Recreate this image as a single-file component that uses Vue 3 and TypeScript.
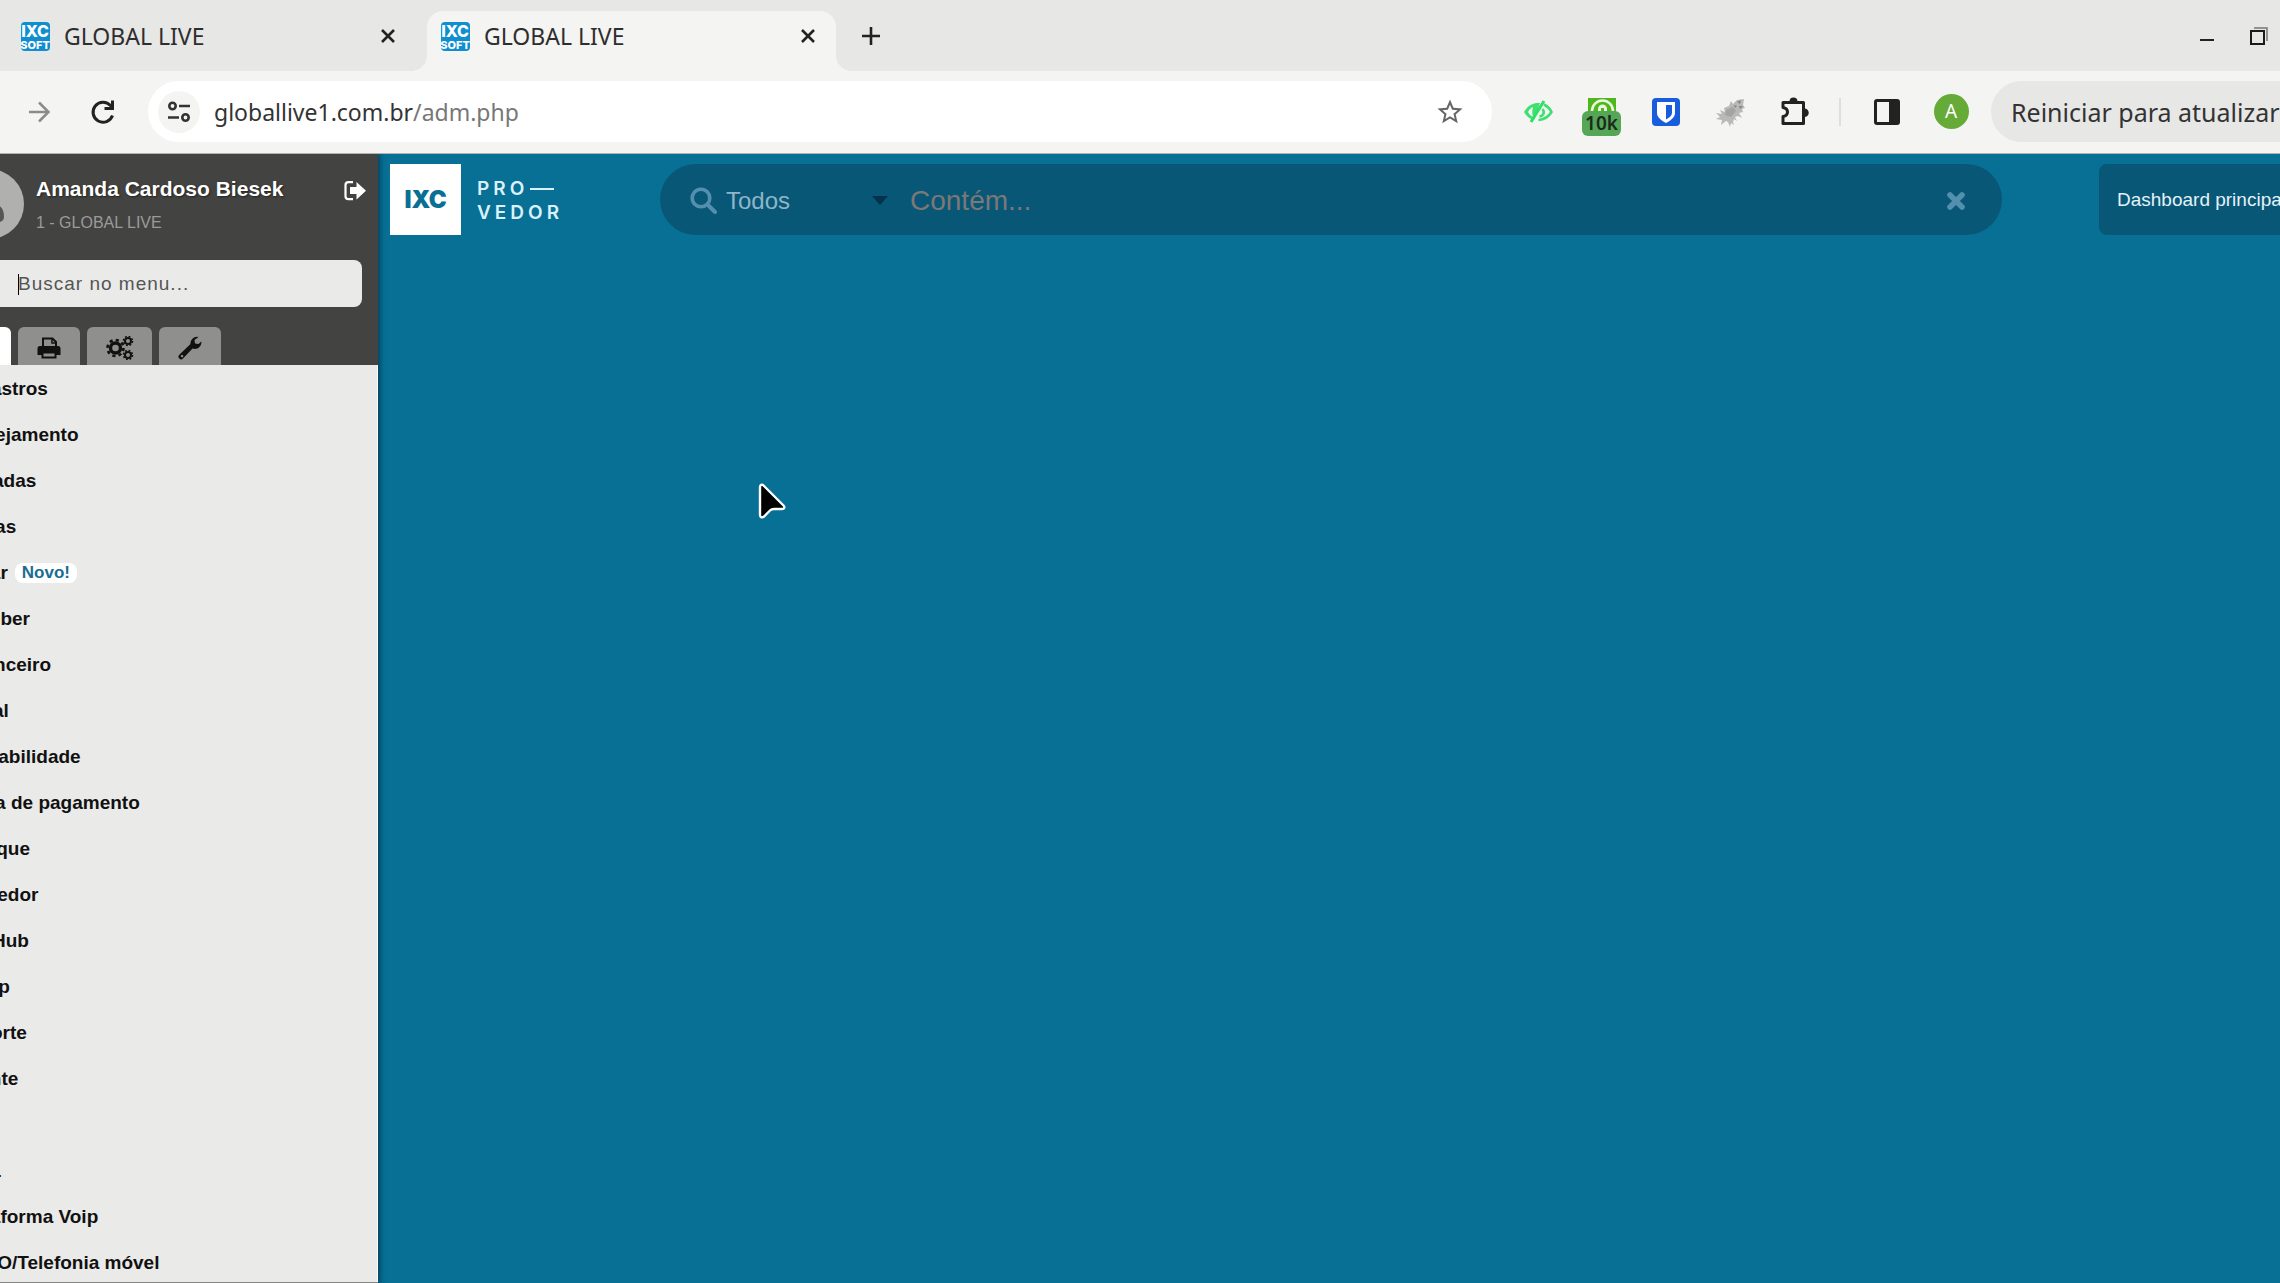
<script setup lang="ts">
import { ref } from 'vue'

interface MenuItem {
  label: string
  badge?: string
}

const tabs = ref([
  { id: 1, title: 'GLOBAL LIVE', active: false },
  { id: 2, title: 'GLOBAL LIVE', active: true },
])

const menu: MenuItem[] = [
  { label: 'Cadastros' },
  { label: 'Planejamento' },
  { label: 'Entradas' },
  { label: 'Saídas' },
  { label: 'Pagar', badge: 'Novo!' },
  { label: 'Receber' },
  { label: 'Financeiro' },
  { label: 'Fiscal' },
  { label: 'Contabilidade' },
  { label: 'Folha de pagamento' },
  { label: 'Estoque' },
  { label: 'Provedor' },
  { label: 'IXC Hub' },
  { label: 'inMap' },
  { label: 'Suporte' },
  { label: 'Cliente' },
  { label: 'Voip' },
  { label: 'MAIL' },
  { label: 'Plataforma Voip' },
  { label: 'MVNO/Telefonia móvel' },
]

const menuQuery = ref('')
const query = ref('')
</script>

<template>
  <div class="window">
    <header class="tabstrip">
      <div v-for="tab in tabs" :key="tab.id" class="tab" :class="{ active: tab.active }">
        <svg class="favicon" viewBox="0 0 29 29" aria-hidden="true">
          <rect width="29" height="29" rx="4" fill="#0f8fd0" />
          <text x="14" y="15" text-anchor="middle" class="fav-big">IXC</text>
          <text x="14" y="27" text-anchor="middle" class="fav-small">SOFT</text>
        </svg>
        <span class="tab-title">{{ tab.title }}</span>
        <button class="tab-close" type="button" aria-label="Fechar aba">
          <svg width="16" height="16" viewBox="0 0 16 16"><path d="M2 2l12 12M14 2L2 14" stroke="#222" stroke-width="2.6" /></svg>
        </button>
      </div>
      <button class="new-tab" type="button" aria-label="Nova aba">
        <svg width="18" height="18" viewBox="0 0 18 18"><path d="M9 0v18M0 9h18" stroke="#222" stroke-width="2.6" /></svg>
      </button>
      <div class="win-controls">
        <button type="button" aria-label="Minimizar">
          <svg width="18" height="20" viewBox="0 0 18 20"><path d="M2 14h14" stroke="#222" stroke-width="2" /></svg>
        </button>
        <button type="button" aria-label="Restaurar">
          <svg width="20" height="20" viewBox="0 0 20 20" fill="none"><path d="M5 2h13v13" stroke="#777" stroke-width="1.5" /><rect x="2" y="5" width="13" height="13" stroke="#1a1a1a" stroke-width="2" /></svg>
        </button>
      </div>
    </header>

    <div class="toolbar">
      <button class="tool" type="button" aria-label="Avançar">
        <svg width="24" height="24" viewBox="0 0 24 24" fill="none"><path d="M2 12h19M12 2.500l9.500 9.500-9.500 9.500" stroke="#8b8b8a" stroke-width="2.500" /></svg>
      </button>
      <button class="tool" type="button" aria-label="Recarregar">
        <svg width="26" height="26" viewBox="0 0 26 26" fill="none"><path d="M22.500 16.500A10 10 0 1 1 20.500 6.500L22 8" stroke="#222" stroke-width="3" /><path d="M24 1.500v9.500h-9.500V8H21V1.500z" fill="#222" /></svg>
      </button>
      <div class="address">
        <button class="site-info" type="button" aria-label="Informações do site">
          <svg width="24" height="22" viewBox="0 0 24 22" fill="none" stroke="#333" stroke-width="2.600"><circle cx="5.500" cy="5" r="3.200" /><path d="M12 5h11M1 16.500h11" /><circle cx="18.500" cy="16.500" r="3.200" /></svg>
        </button>
        <a class="url" href="#">globallive1.com.br<span>/adm.php</span></a>
        <button class="star" type="button" aria-label="Favoritar">
          <svg width="30" height="30" viewBox="0 0 24 24"><path fill="#666" d="M22 9.240l-7.190-.620L12 2 9.190 8.630 2 9.240l5.460 4.730L5.820 21 12 17.270 18.180 21l-1.630-7.030L22 9.240zM12 15.400l-3.760 2.270 1-4.280-3.320-2.880 4.380-.380L12 6.100l1.710 4.040 4.380.380-3.320 2.880 1 4.280L12 15.400z" /></svg>
        </button>
      </div>
      <button class="tool" type="button" aria-label="Privacidade">
        <svg width="30" height="24" viewBox="0 0 30 24" fill="none"><path d="M1 12C7 2 14 3 17 3L11 20C7 19 3 16 1 12z" fill="#3ee06f" /><path d="M5 12c1.500-3 3-4 5-5-1 4-1 6 0 10-2-1-4-3-5-5z" fill="#f4f4f3" /><path d="M8 22L21 1" stroke="#2fe068" stroke-width="3" /><path d="M21 4.500c3 1.500 6 4.500 7.500 7.500-3 5-7 7.500-13 8M19.500 9c3 4 0 7-3 7.500" stroke="#3ee06f" stroke-width="2.600" /></svg>
      </button>
      <button class="tool badge-tool" type="button" aria-label="Extensão, 10k bloqueados">
        <svg width="28" height="28" viewBox="0 0 28 28" fill="none"><rect width="28" height="28" fill="#4fb71d" /><path d="M4 13a10.500 10.500 0 0 1 21 0" stroke="#e6f7dc" stroke-width="2.500" /><path d="M10 14v-3a4.500 4.500 0 0 1 9 0v3" fill="#e6f7dc" /><path d="M13 14v-4h3v4" fill="#4fb71d" /></svg>
        <span class="ext-badge">10k</span>
      </button>
      <button class="tool" type="button" aria-label="Cofre de senhas">
        <svg width="28" height="28" viewBox="0 0 28 28"><rect width="28" height="28" rx="4" fill="#175ddc" /><path d="M5 4h18v11c0 4-4 7.500-9 10-5-2.500-9-6-9-10z" fill="#fff" /><path d="M14 7h6v8c0 2.500-2.500 4.500-6 6.500z" fill="#175ddc" /></svg>
      </button>
      <button class="tool" type="button" aria-label="Extensão">
        <svg width="30" height="30" viewBox="0 0 30 30"><path fill="#b9b9b8" d="M9 11l5-2 2-5 2 3 4-4 7-1-1 6 2 3-3 1 1 3-4 1 3 5-4-2-3 1 2 4-3-2-1 3 1 3-3-2-1 4-2-5-2-1-5 4 1-5-6-1 4-2-4-4 6 1-2-4 5 2z" /><path fill="#8f8f8e" d="M11 13l7-3 3 4-5 6-6-2z" opacity=".5" /><path fill="#858584" d="M22 5l4-2-1 4zM24 9l4 0-3 3zM19 8l3 1-2 2z" /></svg>
      </button>
      <button class="tool" type="button" aria-label="Extensões">
        <svg width="32" height="32" viewBox="0 0 32 32"><path d="M5 6.500h20.500v21H5v-7c6-1 6-8 0-9z" fill="none" stroke="#222" stroke-width="3" stroke-linejoin="round" /><path d="M11.500 5.500a4 4 0 0 1 8 0zM26.500 12.500a4 4 0 0 1 0 8.500z" fill="#222" /></svg>
      </button>
      <span class="divider"></span>
      <button class="tool" type="button" aria-label="Painel lateral">
        <svg width="26" height="26" viewBox="0 0 26 26"><rect x="1.500" y="1.500" width="23" height="23" rx="1.500" fill="none" stroke="#222" stroke-width="3" /><path d="M15 2h9v22h-9z" fill="#222" /></svg>
      </button>
      <button class="tool" type="button" aria-label="Perfil"><span class="profile">A</span></button>
      <button class="restart" type="button">Reiniciar para atualizar</button>
    </div>

    <div class="page">
      <aside class="sidebar">
        <div class="side-head">
          <div class="user">
            <svg class="avatar" viewBox="0 0 70 70" aria-hidden="true"><circle cx="35" cy="35" r="35" fill="#b0b0af" /><circle cx="34" cy="24" r="9" fill="#565655" /><path d="M19 50c0-11 4-16 15-16s16 4 16 14c0 3-2 5-5 5H23c-3 0-4-1-4-3z" fill="#565655" /></svg>
            <div class="who">
              <strong>Amanda Cardoso Biesek</strong>
              <small>1 - GLOBAL LIVE</small>
            </div>
            <button class="logout" type="button" aria-label="Sair">
              <svg width="22" height="20" viewBox="0 0 22 20"><path d="M9 1.200H4.500a3 3 0 0 0-3 3v11a3 3 0 0 0 3 3H9" fill="none" stroke="#fff" stroke-width="2.200" /><path d="M6 6h6.500V1L22 9.700l-9.500 8.800V13H6z" fill="#fff" /></svg>
            </button>
          </div>
          <input v-model="menuQuery" class="menu-search" type="text" placeholder="Buscar no menu..." aria-label="Buscar no menu" />
          <i class="caret"></i>
          <nav class="side-tabs">
            <button class="current" type="button" aria-label="Menu"></button>
            <button class="narrow" type="button" aria-label="Relatórios">
              <svg width="24" height="22" viewBox="0 0 24 22"><path d="M6 10V1.500h9.500L19 5v5" fill="none" stroke="#111" stroke-width="2" /><path d="M15 1v5h4" fill="none" stroke="#111" stroke-width="1.500" /><path d="M3 9h18a2.500 2.500 0 0 1 2.500 2.500V18H19v-3H5v3H.5v-6.500A2.500 2.500 0 0 1 3 9z" fill="#111" /><path d="M5.500 15.500h13v5h-13z" fill="none" stroke="#111" stroke-width="2" /></svg>
            </button>
            <button class="wide" type="button" aria-label="Configurações">
              <svg width="28" height="24" viewBox="0 0 28 24" fill="none" stroke="#111"><circle cx="9.500" cy="12" r="5" stroke-width="3.400" /><circle cx="9.500" cy="12" r="8" stroke-width="2.600" stroke-dasharray="3.140 3.140" /><circle cx="22" cy="5" r="3" stroke-width="2" /><circle cx="22" cy="5" r="4.500" stroke-width="1.600" stroke-dasharray="1.770 1.770" /><circle cx="22" cy="19" r="3" stroke-width="2" /><circle cx="22" cy="19" r="4.500" stroke-width="1.600" stroke-dasharray="1.770 1.770" /></svg>
            </button>
            <button class="narrow" type="button" aria-label="Ferramentas">
              <svg width="24" height="24" viewBox="0 0 24 24"><path fill="#111" fill-rule="evenodd" d="M12.500 8A6.500 6.500 0 0 1 20.500 1l-4 3 .5 3.500 3.500.5 2.800-2.500A6.500 6.500 0 0 1 14.500 12.500L5 22.500a2.500 2.500 0 0 1-3.700-3.700zM3.200 19.200a1.200 1.200 0 1 0 1.700 1.700 1.200 1.200 0 0 0-1.700-1.700z" /></svg>
            </button>
          </nav>
        </div>
        <ul class="menu">
          <li v-for="item in menu" :key="item.label">
            <a href="#">{{ item.label }}</a>
            <span v-if="item.badge" class="new">{{ item.badge }}</span>
          </li>
        </ul>
      </aside>

      <main class="main">
        <div class="topbar">
          <div class="logo">
            <span class="logo-box">IXC</span>
            <span class="logo-text"><span class="row">PRO<i></i></span><span class="row">VEDOR</span></span>
          </div>
          <div class="search">
            <svg width="27" height="27" viewBox="0 0 27 27" fill="none" stroke="#5290ad"><circle cx="11" cy="11" r="8.800" stroke-width="3.600" /><path d="M17.500 17.500l7.500 7.500" stroke-width="4" stroke-linecap="round" /></svg>
            <select aria-label="Filtro"><option>Todos</option></select>
            <svg class="arrow" width="16" height="9" viewBox="0 0 16 9"><path d="M0 0h16L8 9z" fill="#053248" /></svg>
            <input v-model="query" type="text" placeholder="Contém..." aria-label="Pesquisar" />
            <button type="button" aria-label="Limpar">
              <svg width="20" height="20" viewBox="0 0 20 20"><path d="M4 4l12 12M16 4L4 16" stroke="#5290ad" stroke-width="5.600" stroke-linecap="round" /></svg>
            </button>
          </div>
          <button class="dashboard" type="button">Dashboard principal</button>
        </div>
      </main>
    </div>

    <svg class="pointer" width="30" height="38" viewBox="0 0 30 38" aria-hidden="true"><path d="M3 4v28c0 2.500 2 3 4 1.500l6-6c1-1 2-1.500 4-1.500h8c2.500 0 3-2 1.500-3.500L6.500 2.500C5 1 3 2 3 4z" fill="#000" stroke="#fff" stroke-width="2.400" /></svg>
  </div>
</template>

<style>
body {
  margin: 0;
  background: #086f95;
}
</style>

<style scoped>
.window {
  position: relative;
  display: flex;
  flex-direction: column;
  height: 100vh;
  overflow: hidden;
  font-family: "Liberation Sans", Arial, sans-serif;
}
.window * {
  box-sizing: border-box;
}
button {
  border: 0;
  padding: 0;
  background: none;
  font: inherit;
  color: inherit;
  display: flex;
  align-items: center;
  justify-content: center;
}
a {
  color: inherit;
  text-decoration: none;
}

/* browser tabs */
.tabstrip {
  display: flex;
  flex: none;
  gap: 11px;
  height: 71px;
  padding: 11px 11px 0 7px;
  background: #e7e7e6;
  font-family: "Noto Sans", sans-serif;
}
.tab {
  position: relative;
  display: flex;
  align-items: center;
  width: 409px;
  padding: 0 20px 10px 14px;
  border-radius: 16px 16px 0 0;
  color: #2e2e2e;
}
.tab.active {
  background: #f4f4f3;
}
.tab.active::before,
.tab.active::after {
  content: "";
  position: absolute;
  bottom: 0;
  width: 16px;
  height: 16px;
}
.tab.active::before {
  right: 100%;
  background: radial-gradient(circle at 0 0, transparent 16px, #f4f4f3 16px);
}
.tab.active::after {
  left: 100%;
  background: radial-gradient(circle at 100% 0, transparent 16px, #f4f4f3 16px);
}
.favicon {
  width: 29px;
  height: 29px;
}
.fav-big,
.fav-small {
  font-family: Inter, sans-serif;
  font-weight: 800;
  fill: #fff;
}
.fav-big {
  font-size: 16px;
}
.fav-small {
  font-size: 11px;
}
.tab-title {
  flex: 1;
  margin-left: 14px;
  font-size: 23px;
  line-height: 30px;
  white-space: nowrap;
}
.tab-close {
  width: 16px;
}
.new-tab {
  width: 48px;
  height: 50px;
}
.win-controls {
  display: flex;
  gap: 33px;
  height: 50px;
  margin-left: auto;
}

/* browser toolbar */
.toolbar {
  display: flex;
  flex: none;
  align-items: center;
  height: 83px;
  padding: 0 0 1px 7px;
  background: #f4f4f3;
  border-bottom: 1px solid #b4b2af;
  font-family: "Noto Sans", sans-serif;
}
.tool {
  position: relative;
  flex: 0 0 64px;
  height: 61px;
}
.address {
  display: flex;
  align-items: center;
  flex: 1;
  height: 61px;
  margin: 0 14px 0 13px;
  padding: 0 27px 0 10px;
  border-radius: 31px;
  background: #fff;
}
.site-info {
  width: 42px;
  height: 42px;
  border-radius: 50%;
  background: #f4f4f3;
}
.url {
  flex: 1;
  margin-left: 14px;
  font-size: 23px;
  line-height: 32px;
  color: #333;
}
.url span {
  color: #777;
}
.ext-badge {
  position: absolute;
  left: 12px;
  top: 30px;
  width: 39px;
  height: 25px;
  border-radius: 6px;
  background: #55a657;
  color: #1c2b1c;
  font-size: 19px;
  font-weight: 600;
  line-height: 25px;
}
.divider {
  width: 2px;
  height: 28px;
  margin: 0 14px 0 13px;
  background: #dededd;
}
.profile {
  width: 35px;
  height: 35px;
  border-radius: 50%;
  background: #66ab37;
  color: #fff;
  font-size: 19px;
  line-height: 35px;
}
.restart {
  flex: 0 0 289px;
  height: 61px;
  margin-left: 8px;
  padding-left: 20px;
  justify-content: flex-start;
  border-radius: 31px 0 0 31px;
  background: #e7e7e6;
  color: #333;
  font-size: 25px;
  white-space: nowrap;
  overflow: hidden;
}

/* page */
.page {
  display: flex;
  flex: 1;
  min-height: 0;
}
.sidebar {
  z-index: 1;
  flex: 0 0 378px;
  overflow: hidden;
  background: #eaeae9;
  border-bottom: 1px solid #858584;
  box-shadow: 0 0 6px 1px #03344a;
  clip-path: inset(0 -10px 0 0);
}
.side-head {
  position: relative;
  height: 211px;
  margin-left: -46px;
  padding: 15px 16px 0 0;
  background: #434341;
}
.user {
  display: flex;
  height: 91px;
  color: #fff;
}
.avatar {
  width: 70px;
  height: 70px;
}
.who {
  flex: 1;
  margin-left: 12px;
}
.who strong,
.who small {
  display: block;
  white-space: nowrap;
}
.who strong {
  padding-top: 8px;
  font-size: 21px;
  line-height: 24px;
  text-shadow: 1px 1px 2px #222;
}
.who small {
  margin-top: 12px;
  font-size: 16px;
  line-height: 20px;
  color: #9b9b9a;
}
.logout {
  width: 22px;
  height: 44px;
  margin-right: -4px;
}
.menu-search {
  display: block;
  width: 100%;
  height: 47px;
  padding: 1px 0 0 64px;
  border: 0;
  border-radius: 8px;
  background: #eaeae9;
  font: 19px "Liberation Sans", Arial, sans-serif;
  letter-spacing: 1px;
}
.menu-search::placeholder {
  color: #555;
}
.caret {
  position: absolute;
  left: 64px;
  top: 120px;
  width: 1px;
  height: 21px;
  background: #000;
}
.side-tabs {
  display: flex;
  gap: 7px;
  margin-top: 20px;
}
.side-tabs button {
  height: 38px;
  padding-top: 4px;
  border-radius: 6px 6px 0 0;
  background: #8f8f8e;
}
.side-tabs .narrow {
  width: 62px;
}
.side-tabs .wide {
  width: 65px;
}
.side-tabs .current {
  width: 57px;
  background: #fff;
}
.menu {
  margin: 0 0 0 -45px;
  padding: 1px 0 0;
  border-right: 1px solid #fff;
  list-style: none;
}
.menu li {
  display: flex;
  align-items: center;
  height: 46px;
  font-size: 19px;
  font-weight: bold;
  line-height: 22px;
  color: #111;
  white-space: nowrap;
}
.new {
  margin-left: 7px;
  padding: 0 7px;
  border-radius: 8px;
  background: #fff;
  color: #1a6c92;
  font-size: 17px;
  line-height: 20px;
}
.main {
  flex: 1;
  min-width: 0;
  background: #086f95;
}
.topbar {
  display: flex;
  padding: 10px 0 0 12px;
}
.logo {
  display: flex;
  width: 270px;
}
.logo-box {
  width: 71px;
  height: 71px;
  background: #fff;
  color: #086f95;
  font: 900 24px/71px Inter, sans-serif;
  text-align: center;
}
.logo-text {
  margin: 13px 0 0 16px;
  color: #d9f1fa;
  font: 600 19px/24px Inter, sans-serif;
  letter-spacing: 4px;
}
.row {
  display: flex;
  align-items: center;
}
.row i {
  width: 24px;
  height: 2px;
  margin-left: 2px;
  background: #d9f1fa;
}
.search {
  display: flex;
  align-items: center;
  flex: 1;
  height: 71px;
  padding: 2px 36px 0 30px;
  border-radius: 36px;
  background: #095777;
}
.search select {
  width: 146px;
  margin-left: 9px;
  padding: 0;
  border: 0;
  appearance: none;
  background: none;
  color: #8db6c8;
  font: 24px/32px "Liberation Sans", Arial, sans-serif;
}
.search input {
  flex: 1;
  min-width: 0;
  margin-left: 22px;
  padding: 0;
  border: 0;
  background: none;
  color: #fff;
  font: 28px/36px "Liberation Sans", Arial, sans-serif;
}
.search input::placeholder {
  color: #7b7876;
}
.dashboard {
  flex: 0 0 181px;
  height: 71px;
  margin-left: 97px;
  padding-left: 18px;
  justify-content: flex-start;
  border-radius: 8px 0 0 8px;
  background: #095777;
  color: #e3f2f8;
  font-size: 19px;
  white-space: nowrap;
  overflow: hidden;
}
.pointer {
  position: absolute;
  left: 757px;
  top: 483px;
}
</style>
